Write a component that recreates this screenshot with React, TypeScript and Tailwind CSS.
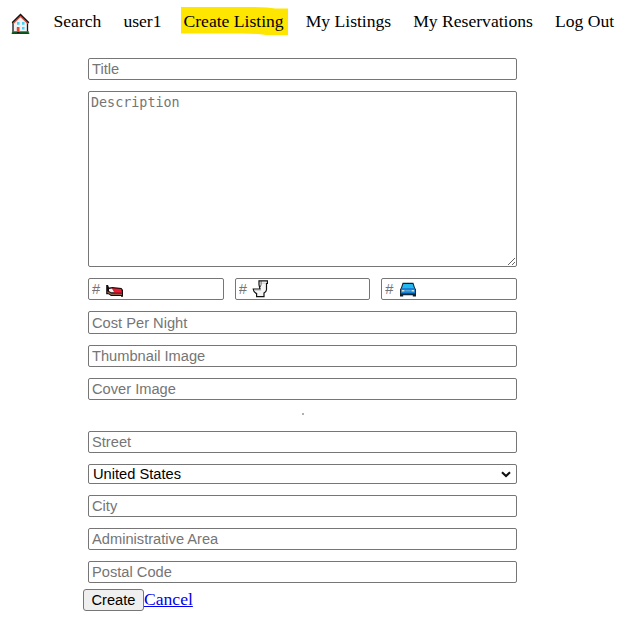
import React from "react";

const fieldClass =
  "block w-full h-[22px] shrink-0 rounded-[2px] border border-[#767676] bg-white pl-[3px] pr-0 py-0 text-[14.667px] leading-[20px] text-black placeholder:text-[#757575] outline-none";

function Field({ placeholder, className = "" }: { placeholder: string; className?: string }) {
  return <input type="text" placeholder={placeholder} className={`${fieldClass} ${className}`} />;
}

function HouseIcon() {
  return (
    <svg width="20" height="22" viewBox="0 0 20 22" className="block">
      <path d="M3 9.500 10.500 3l7 6.500V19.500H3Z" fill="#f1f1f5" stroke="#161616" strokeWidth="1.300" />
      <path d="M2.300 9.900 10.500 1.800l8.200 8.100" fill="none" stroke="#111" strokeWidth="1.800" />
      <path d="M3.200 10.500 10.500 3.300l7.300 7.200" fill="none" stroke="#e0523f" strokeWidth="1.200" />
      <path d="M7 9h2.500v2.700H7ZM12 9h2.500v2.700H12ZM12 14h2.500v2.500H12Z" fill="#42d4f4" />
      <path d="M6.800 14h2.700v5H6.800Z" fill="#e8452f" />
      <path d="M2 18.300h5v1.500H2ZM9.500 18.300h9.500v1.500H9.500Z" fill="#16952e" />
      <path d="M1.700 19.700h17.600v1.100H1.700Z" fill="#111" />
    </svg>
  );
}

function BedIcon() {
  return (
    <svg width="19" height="16" viewBox="0 0 19 16" className="block">
      <path d="M1.200 4H3L4 6.500 7.500 6 16.500 7 18 9V15.800H16V15H6L3.500 13.300H1.200Z" fill="#150b0b" />
      <path d="M7 7.200 16.300 8 17 11.700H9.500Z" fill="#ee1a32" />
      <path d="M4 8 7 7.500 9.300 11.300H6L4 10Z" fill="#f3eef0" />
      <path d="M2.300 10.300 6.500 12.500H17V13.900H6.500L2.300 11.800Z" fill="#8e604e" />
    </svg>
  );
}

function ToiletIcon() {
  return (
    <svg width="17" height="18" viewBox="0 0 17 18" className="block">
      <path
        d="M7 .9H15.400V3.500H14.500V9.800Q14.300 12 12 13V16.600H4.600V13.500Q1.500 12.200 1.200 9H8L7 4.800Z"
        fill="#f5f5f5"
        stroke="#111"
        strokeWidth="1.200"
      />
      <path d="M2.500 10.300H9.200M10 3.200H14" fill="none" stroke="#bbb" strokeWidth=".7" />
      <path d="M9.100 1V4.500L8.300 7" fill="none" stroke="#333" strokeWidth=".8" />
    </svg>
  );
}

function CarIcon() {
  return (
    <svg width="20" height="16" viewBox="0 0 20 16" className="block">
      <path d="M4.600 1.800h10.800L17 6.800l1 1.700V15.500h-3.200v-1.200H5.200v1.200H2V8.500L3 6.800Z" fill="#10202c" />
      <path d="M5.300 3h9.400L16 7H4Z" fill="#24b9ee" />
      <path d="M3.700 7h12.600l.8 1.700v3.700H2.900V8.700Z" fill="#1683d8" />
      <path d="M3.800 9h2.700v1.500H3.800ZM13.500 9h2.700v1.500h-2.700Z" fill="#e2dfc7" />
      <path d="M7.300 9.300h5.400v1H7.300Z" fill="#83b6cd" />
      <path d="M3.200 12.300h13.600v.9H3.200Z" fill="#124c86" />
    </svg>
  );
}

function CountField({ label, children }: { label: string; children: React.ReactNode }) {
  return (
    <label className="relative block min-w-0 flex-1">
      <input type="text" aria-label={label} placeholder="#" className={fieldClass} />
      <span className="pointer-events-none absolute inset-y-0 left-[17px] flex items-center">{children}</span>
    </label>
  );
}

export default function App() {
  return (
    <div className="h-[640px] w-[636px] overflow-hidden bg-white font-['Liberation_Sans',Arial,sans-serif] text-black">
      <nav className="flex h-[58px] items-start gap-[22px] pl-[10px] pt-[11px] font-['Liberation_Serif','Times_New_Roman',serif] text-[17.6px] leading-[20px] whitespace-nowrap">
        <a className="mr-[1.500px] pt-[2px]" aria-label="Home">
          <HouseIcon />
        </a>
        <a>Search</a>
        <a>user1</a>
        <a className="relative">
          <svg className="absolute -left-[2.500px] -top-[4px]" width="108" height="29" viewBox="0 0 108 29">
            <path d="M0 0 70 0Q88 0 94 1.500H107V28H85Q76 26.500 62 26.500H0Z" fill="#ffe600" />
          </svg>
          <span className="relative">Create Listing</span>
        </a>
        <a>My Listings</a>
        <a>My Reservations</a>
        <a>Log Out</a>
      </nav>

      <form className="ml-[88px] flex w-[429px] flex-col gap-[11px]">
        <Field placeholder="Title" />
        <textarea
          placeholder="Description"
          className="block h-[176px] w-full resize rounded-[2px] border border-[#767676] bg-white px-[2px] py-[2px] font-['DejaVu_Sans_Mono',monospace] text-[13.400px] leading-[17px] outline-none placeholder:text-[#757575]"
        />
        <div className="flex h-[22px] gap-[11px]">
          <CountField label="Beds"><BedIcon /></CountField>
          <CountField label="Bathrooms"><ToiletIcon /></CountField>
          <CountField label="Parking spaces"><CarIcon /></CountField>
        </div>
        <Field placeholder="Cost Per Night" className="h-[23px]" />
        <Field placeholder="Thumbnail Image" />
        <Field placeholder="Cover Image" />
        <div className="flex h-[9px] items-end justify-center">
          <hr className="mb-[5px] h-[2px] w-[2px] border-0 bg-[#b0b0b0]" />
        </div>
        <Field placeholder="Street" />
        <div className="relative h-[20px]">
          <select className="block h-[20px] w-full appearance-none rounded-[2px] border border-[#767676] bg-white pl-[4px] text-[14.667px] leading-[18px] text-black outline-none">
            <option>United States</option>
          </select>
          <svg className="pointer-events-none absolute right-[6px] top-[7px]" width="10" height="7" viewBox="0 0 10 7">
            <path d="M1 1.200 5 5l4-3.800" fill="none" stroke="#101010" strokeWidth="2.100" />
          </svg>
        </div>
        <Field placeholder="City" />
        <Field placeholder="Administrative Area" />
        <Field placeholder="Postal Code" />
        <div className="-ml-[5px] -mt-[5px] flex h-[22px] items-start">
          <button
            type="button"
            className="h-[22px] w-[61px] rounded-[3px] border border-[#767676] bg-[#efefef] p-0 text-[14.667px] leading-[20px]"
          >
            Create
          </button>
          <a
            href="#"
            className="font-['Liberation_Serif','Times_New_Roman',serif] text-[17.6px] leading-[20px] text-[#0000ee] underline"
          >
            Cancel
          </a>
        </div>
      </form>
    </div>
  );
}
